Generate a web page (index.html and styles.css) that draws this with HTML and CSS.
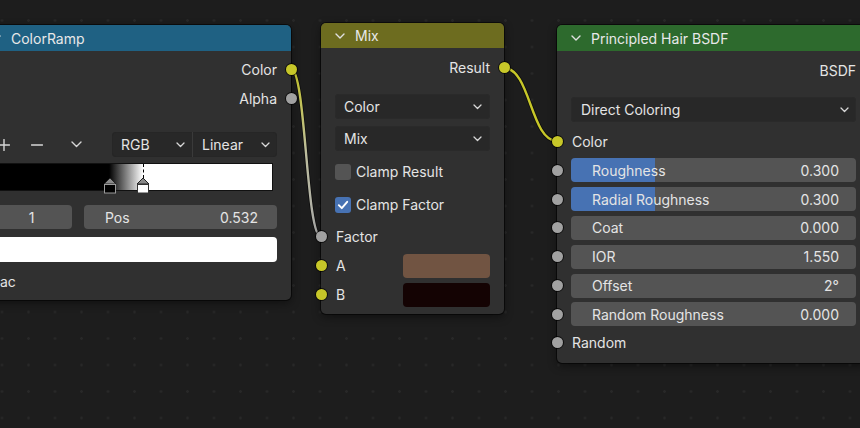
FILE: index.html
```html
<!DOCTYPE html>
<html>
<head>
<meta charset="utf-8">
<link rel="stylesheet" href="styles.css">
</head>
<body>
<div class="canvas">
  <svg class="wires" width="860" height="428" viewBox="0 0 860 428">
    <defs>
      <linearGradient id="g1" gradientUnits="userSpaceOnUse" x1="291" y1="69" x2="321" y2="237">
        <stop offset="0" stop-color="#c7c729"/>
        <stop offset="0.5" stop-color="#bdbd9e"/>
        <stop offset="1" stop-color="#ababab"/>
      </linearGradient>
    </defs>
    <path class="wire-shadow" d="M291 69 C306 69 306 237 321 237"/>
    <path class="wire" stroke="url(#g1)" d="M291 69 C306 69 306 237 321 237"/>
    <path class="wire-shadow" d="M504 68 C530.5 68 530.5 141 557 141"/>
    <path class="wire wire-yellow" d="M504 68 C530.5 68 530.5 141 557 141"/>
  </svg>

  <!-- ColorRamp -->
  <div class="node node-cr">
    <div class="header header-blue">
      <svg class="hchev" width="10" height="6" viewBox="0 0 10 6"><path d="M1 1 L5 5 L9 1"/></svg>
      <span>ColorRamp</span>
    </div>
    <div class="body body-cr">
      <div class="row out"><span>Color</span><i class="socket right yellow"></i></div>
      <div class="row out"><span>Alpha</span><i class="socket right gray"></i></div>
      <div class="ramp-tools">
        <div class="icon-btn ib1"><svg width="12" height="12" viewBox="0 0 12 12"><path d="M6 0.5 V11.5 M0.5 6 H11.5"/></svg></div>
        <div class="icon-btn ib2"><svg width="12" height="12" viewBox="0 0 12 12"><path d="M0.5 6 H11.5"/></svg></div>
        <div class="icon-btn ib3"><svg width="11" height="7" viewBox="0 0 11 7"><path d="M1 1 L5.5 5.5 L10 1"/></svg></div>
        <div class="spacer"></div>
        <div class="menu-group">
          <div class="menu-part mp1"><span>RGB</span><svg class="chev" width="9" height="6" viewBox="0 0 9 6"><path d="M1 1 L4.5 4.5 L8 1"/></svg></div>
          <div class="menu-part mp2"><span>Linear</span><svg class="chev" width="9" height="6" viewBox="0 0 9 6"><path d="M1 1 L4.5 4.5 L8 1"/></svg></div>
        </div>
      </div>
      <div class="ramp">
        <div class="ramp-bar"></div>
        <i class="active-line"></i>
        <svg class="marker m1" width="14" height="17" viewBox="0 0 14 17"><path class="mk-top" d="M1 7 L7 1 L13 7 Z"/><rect class="mk-body-dark" x="1.5" y="7.5" width="11" height="8.5"/></svg>
        <svg class="marker m2" width="14" height="17" viewBox="0 0 14 17"><path class="mk-top" d="M1 7 L7 1 L13 7 Z"/><rect class="mk-body-light" x="1.5" y="7.5" width="11" height="8.5"/></svg>
      </div>
      <div class="pos-row">
        <div class="num-field idx"><span>1</span></div>
        <div class="num-field pos"><span>Pos</span><span>0.532</span></div>
      </div>
      <div class="color-swatch white"></div>
      <div class="row in"><i class="socket left gray"></i><span>Fac</span></div>
    </div>
  </div>

  <!-- Mix -->
  <div class="node node-mix">
    <div class="header header-olive">
      <svg class="hchev" width="10" height="6" viewBox="0 0 10 6"><path d="M1 1 L5 5 L9 1"/></svg>
      <span>Mix</span>
    </div>
    <div class="body body-mix">
      <div class="row out"><span>Result</span><i class="socket right yellow"></i></div>
      <div class="dropdown dd-color"><span>Color</span><svg class="chev" width="9" height="6" viewBox="0 0 9 6"><path d="M1 1 L4.5 4.5 L8 1"/></svg></div>
      <div class="dropdown dd-mix"><span>Mix</span><svg class="chev" width="9" height="6" viewBox="0 0 9 6"><path d="M1 1 L4.5 4.5 L8 1"/></svg></div>
      <div class="check-row"><i class="checkbox"></i><span>Clamp Result</span></div>
      <div class="check-row"><i class="checkbox on"><svg width="16" height="16" viewBox="0 0 16 16"><path d="M3.8 8.2 L6.8 11.2 L12.2 4.8"/></svg></i><span>Clamp Factor</span></div>
      <div class="row in"><i class="socket left gray"></i><span>Factor</span></div>
      <div class="row in"><i class="socket left yellow"></i><span>A</span><div class="swatch brown"></div></div>
      <div class="row in"><i class="socket left yellow"></i><span>B</span><div class="swatch darkred"></div></div>
    </div>
  </div>

  <!-- Principled Hair BSDF -->
  <div class="node node-ph">
    <div class="header header-green">
      <svg class="hchev" width="10" height="6" viewBox="0 0 10 6"><path d="M1 1 L5 5 L9 1"/></svg>
      <span>Principled Hair BSDF</span>
    </div>
    <div class="body body-ph">
      <div class="row out"><span>BSDF</span><i class="socket right green"></i></div>
      <div class="dropdown dd-direct"><span>Direct Coloring</span><svg class="chev" width="9" height="6" viewBox="0 0 9 6"><path d="M1 1 L4.5 4.5 L8 1"/></svg></div>
      <div class="row in"><i class="socket left yellow"></i><span>Color</span></div>
      <div class="field-row"><i class="socket left gray"></i><div class="slider" style="--fill:29.5%"><span>Roughness</span><span>0.300</span></div></div>
      <div class="field-row"><i class="socket left gray"></i><div class="slider" style="--fill:29.5%"><span>Radial Roughness</span><span>0.300</span></div></div>
      <div class="field-row"><i class="socket left gray"></i><div class="slider"><span>Coat</span><span>0.000</span></div></div>
      <div class="field-row"><i class="socket left gray"></i><div class="slider"><span>IOR</span><span>1.550</span></div></div>
      <div class="field-row"><i class="socket left gray"></i><div class="slider"><span>Offset</span><span>2°</span></div></div>
      <div class="field-row"><i class="socket left gray"></i><div class="slider"><span>Random Roughness</span><span>0.000</span></div></div>
      <div class="row in"><i class="socket left gray"></i><span>Random</span></div>
    </div>
  </div>
</div>
</body>
</html>
```
FILE: styles.css
```css
* { box-sizing: border-box; }
html, body { margin: 0; padding: 0; }
body {
  width: 860px;
  height: 428px;
  overflow: hidden;
  font-family: Inter, "Noto Sans", "DejaVu Sans", sans-serif;
  font-size: 14px;
  color: #e4e4e4;
}
.canvas {
  position: relative;
  width: 860px;
  height: 428px;
  overflow: hidden;
  background-color: #1d1d1d;
  background-image: radial-gradient(circle, #282828 0, #282828 1px, transparent 1.6px);
  background-size: 26.5px 26.5px;
  background-position: -11.25px 7.25px;
}
.wires {
  position: absolute;
  left: 0;
  top: 0;
  z-index: 0;
}
.wire { fill: none; stroke-width: 2.4; }
.wire-yellow { stroke: #c7c729; }
.wire-shadow { fill: none; stroke: rgba(0,0,0,0.55); stroke-width: 4; }

.node {
  position: absolute;
  z-index: 1;
  background: #303030;
  border-radius: 5px;
  box-shadow: 0 0 0 1px rgba(0,0,0,0.55), 0 3px 10px rgba(0,0,0,0.45);
}
.node-cr { left: -23px; top: 25px; width: 314px; }
.node-mix { left: 321px; top: 23px; width: 183px; }
.node-ph { left: 557px; top: 25px; width: 313px; }

.header {
  height: 26px;
  border-radius: 5px 5px 0 0;
  display: flex;
  align-items: center;
  padding-left: 14px;
  gap: 10px;
  color: #e8e8e8;
}
.node-mix .header { height: 25px; }
.header-blue { background: #1f6183; }
.header-olive { background: #6d6c1f; }
.header-green { background: #2d6a2d; }
.hchev path { fill: none; stroke: #e0e0e0; stroke-width: 1.4; stroke-linecap: round; stroke-linejoin: round; }
.chev path { fill: none; stroke: #d8d8d8; stroke-width: 1.3; stroke-linecap: round; stroke-linejoin: round; }

.body { display: flex; flex-direction: column; }
.body-cr { padding: 4px 0 4px; }
.body-mix { padding: 5px 0 5px; }
.body-ph { padding: 5px 0 6px; }

.row {
  position: relative;
  height: 29px;
  display: flex;
  align-items: center;
  padding: 0 14px 0 15px;
}
.row.out { justify-content: flex-end; }

.socket {
  position: absolute;
  top: 50%;
  width: 11px;
  height: 11px;
  margin-top: -5.5px;
  border-radius: 50%;
  box-shadow: 0 0 0 1px rgba(0,0,0,0.7);
}
.socket.left { left: -5.5px; }
.socket.right { right: -5.5px; }
.socket.yellow { background: #c7c729; }
.socket.gray { background: #a1a1a1; }
.socket.green { background: #63c763; }

/* ColorRamp */
.ramp-tools {
  display: flex;
  align-items: center;
  height: 25px;
  margin: 19px 14px 0;
}
.icon-btn {
  width: 26px;
  height: 25px;
  display: flex;
  align-items: center;
  justify-content: center;
}
.icon-btn path { fill: none; stroke: #d6d6d6; stroke-width: 1.4; stroke-linecap: round; stroke-linejoin: round; }
.ib2 { margin-left: 7px; }
.ib3 { margin-left: 13px; }
.spacer { flex: 1; }
.menu-group {
  width: 165px;
  height: 25px;
  display: flex;
  background: #282828;
  border-radius: 4px;
  box-shadow: inset 0 0 0 1px #262626;
}
.menu-part {
  display: flex;
  align-items: center;
  justify-content: space-between;
  padding: 0 7px 0 9px;
}
.mp1 { width: 81px; border-right: 1px solid #3a3a3a; }
.mp2 { flex: 1; padding-left: 9px; }

.ramp {
  position: relative;
  height: 28px;
  margin: 6px 18px 0;
}
.ramp-bar {
  height: 28px;
  border: 1px solid #111;
  background: linear-gradient(to right, #000 0, #000 41%, #fff 53.2%, #fff 100%);
}
.marker {
  position: absolute;
  top: 14px;
  transform: translateX(-50%);
}
.m1 { left: 41.3%; }
.m2 { left: 53.2%; }
.mk-top { fill: #8a8a8a; stroke: #222; stroke-width: 1; }
.mk-body-dark { fill: #000; stroke: #9a9a9a; stroke-width: 1; }
.mk-body-light { fill: #fff; stroke: #333; stroke-width: 1; }
.active-line {
  position: absolute;
  left: 53.2%;
  top: 1px;
  height: 14px;
  border-left: 1px dashed #000;
}

.pos-row {
  display: flex;
  gap: 12px;
  margin: 14px 14px 0;
  height: 24px;
}
.num-field {
  height: 24px;
  background: #545454;
  border-radius: 4px;
  display: flex;
  align-items: center;
}
.num-field.idx { width: 81px; justify-content: center; }
.num-field.pos { flex: 1; justify-content: space-between; padding: 0 19px 0 21px; }

.color-swatch {
  height: 25px;
  margin: 8px 14px 0;
  border-radius: 4px;
}
.color-swatch.white { background: #fff; }
.body-cr .row.in { margin-top: 5px; }

/* Mix */
.dropdown {
  height: 25px;
  margin: 0 14px;
  background: #282828;
  border-radius: 4px;
  box-shadow: inset 0 0 0 1px #2a2a2a;
  display: flex;
  align-items: center;
  justify-content: space-between;
  padding: 0 8px 0 9px;
}
.dd-color { margin-top: 12px; }
.dd-mix { margin-top: 7px; }
.check-row {
  height: 33px;
  display: flex;
  align-items: center;
  gap: 5px;
  padding-left: 14px;
}
.dd-mix + .check-row { margin-top: 4px; }
.check-row + .row { margin-top: 1px; }
.checkbox {
  width: 16px;
  height: 16px;
  border-radius: 3px;
  background: #545454;
  display: block;
}
.checkbox.on { background: #4772b3; }
.checkbox svg { display: block; }
.checkbox path { fill: none; stroke: #fff; stroke-width: 1.9; stroke-linecap: round; stroke-linejoin: round; }
.swatch {
  margin-left: auto;
  width: 87px;
  height: 24px;
  border-radius: 4px;
}
.swatch.brown { background: #715442; }
.swatch.darkred { background: #140303; }

/* Principled */
.dd-direct { margin-top: 12px; padding: 0 7px 0 10px; }
.dd-direct + .row { margin-top: 5px; }
.field-row {
  position: relative;
  height: 28.8px;
  display: flex;
  align-items: center;
  padding: 0 14px;
}
.slider {
  flex: 1;
  height: 24px;
  border-radius: 4px;
  --fill: 0%;
  background: linear-gradient(to right, #4772b3 0, #4772b3 var(--fill), #545454 var(--fill), #545454 100%);
  display: flex;
  align-items: center;
  justify-content: space-between;
  padding: 0 17px 0 21px;
}
.field-row + .row { height: 28px; }
```
